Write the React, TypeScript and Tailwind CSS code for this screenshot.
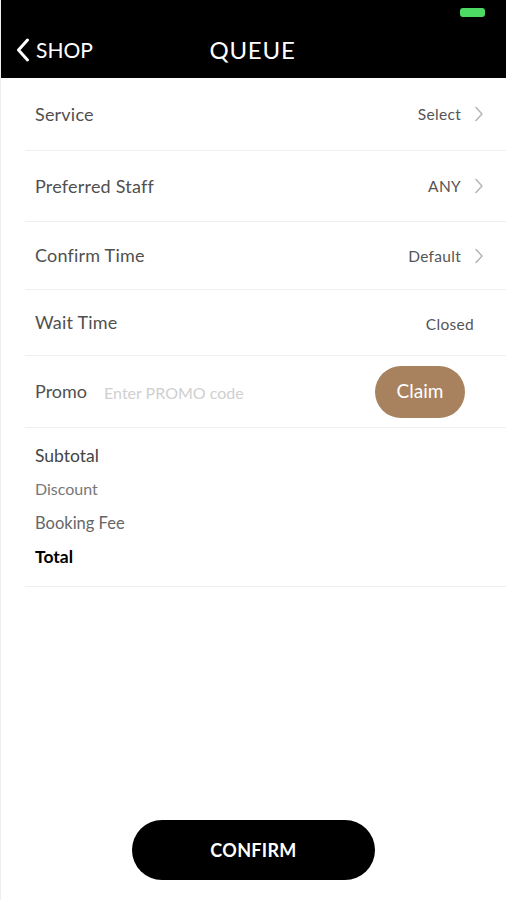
const Chevron = () => (
  <svg className="w-[10px] h-[16px] ml-[13px]" viewBox="0 0 10 16" fill="none" stroke="#b5b5b5" strokeWidth={1.5} strokeLinecap="round" strokeLinejoin="round">
    <path d="M2 1.5l6 6.5-6 6.5" />
  </svg>
)

const Row = ({ label, value, chevron, h }: { label: string; value: string; chevron?: boolean; h: string }) => (
  <div className={`flex items-center justify-between ml-[24px] pl-[10px] pr-[22px] border-b border-[#efefef] ${h}`}>
    <span className="text-[18px] text-[#505050] tracking-[0.2px]">{label}</span>
    <div className="flex items-center">
      <span className={`text-[15.5px] text-[#555] tracking-[0.3px] mt-[2px] ${chevron ? "" : "mr-[10px] mt-[5px]"}`}>{value}</span>
      {chevron && <Chevron />}
    </div>
  </div>
)

export default function App() {
  return (
    <div className="w-[506px] h-[900px] bg-white flex flex-col font-['Lato',_'Noto_Sans',_sans-serif] border-l border-[#eee]">
      {/* Header */}
      <div className="bg-black h-[78px] flex flex-col shrink-0">
        <div className="flex justify-end pr-[21px] pt-[8px]">
          <div className="w-[25px] h-[9px] rounded-[3px] bg-[#4cd964]" />
        </div>
        <div className="relative flex items-center h-[50px] mt-[8px]">
          <div className="flex items-center pl-[15px] text-white">
            <svg className="w-[14px] h-[24px]" viewBox="0 0 14 24" fill="none" stroke="white" strokeWidth={3} strokeLinecap="round" strokeLinejoin="round">
              <path d="M11.5 2L2.5 12l9 10" />
            </svg>
            <span className="text-[21px] ml-[6px] tracking-[0px]">SHOP</span>
          </div>
          <div className="absolute inset-0 flex items-center justify-center pointer-events-none">
            <span className="text-white text-[24px] tracking-[0.8px] mr-[2px]">QUEUE</span>
          </div>
        </div>
      </div>

      <Row label="Service" value="Select" chevron h="h-[73px]" />
      <Row label="Preferred Staff" value="ANY" chevron h="h-[71px]" />
      <Row label="Confirm Time" value="Default" chevron h="h-[68px]" />
      <Row label="Wait Time" value="Closed" h="h-[66px]" />

      {/* Promo */}
      <div className="flex items-center ml-[24px] pl-[10px] h-[72px] border-b border-[#efefef]">
        <span className="text-[18px] text-[#505050]">Promo</span>
        <span className="text-[16px] text-[#cfcfcf] ml-[17px] flex-1 mt-[2px]">Enter PROMO code</span>
        <button className="w-[90px] h-[52px] rounded-full bg-[#a8825f] text-white text-[19px] mr-[41px]">Claim</button>
      </div>

      {/* Summary */}
      <div className="ml-[24px] pl-[10px] pt-[16px] pb-[17px] border-b border-[#efefef] flex flex-col">
        <span className="text-[17.5px] text-[#444] h-[33px] leading-[24px]">Subtotal</span>
        <span className="text-[16px] text-[#777] h-[34px] leading-[24px]">Discount</span>
        <span className="text-[16.5px] text-[#666] h-[34px] leading-[24px]">Booking Fee</span>
        <span className="text-[17.5px] text-black font-bold h-[24px] leading-[24px]">Total</span>
      </div>

      <div className="flex-1" />

      <div className="flex justify-center pb-[20px]">
        <button className="w-[243px] h-[60px] rounded-full bg-black text-white text-[18px] font-bold tracking-[0.3px]">CONFIRM</button>
      </div>
    </div>
  )
}
